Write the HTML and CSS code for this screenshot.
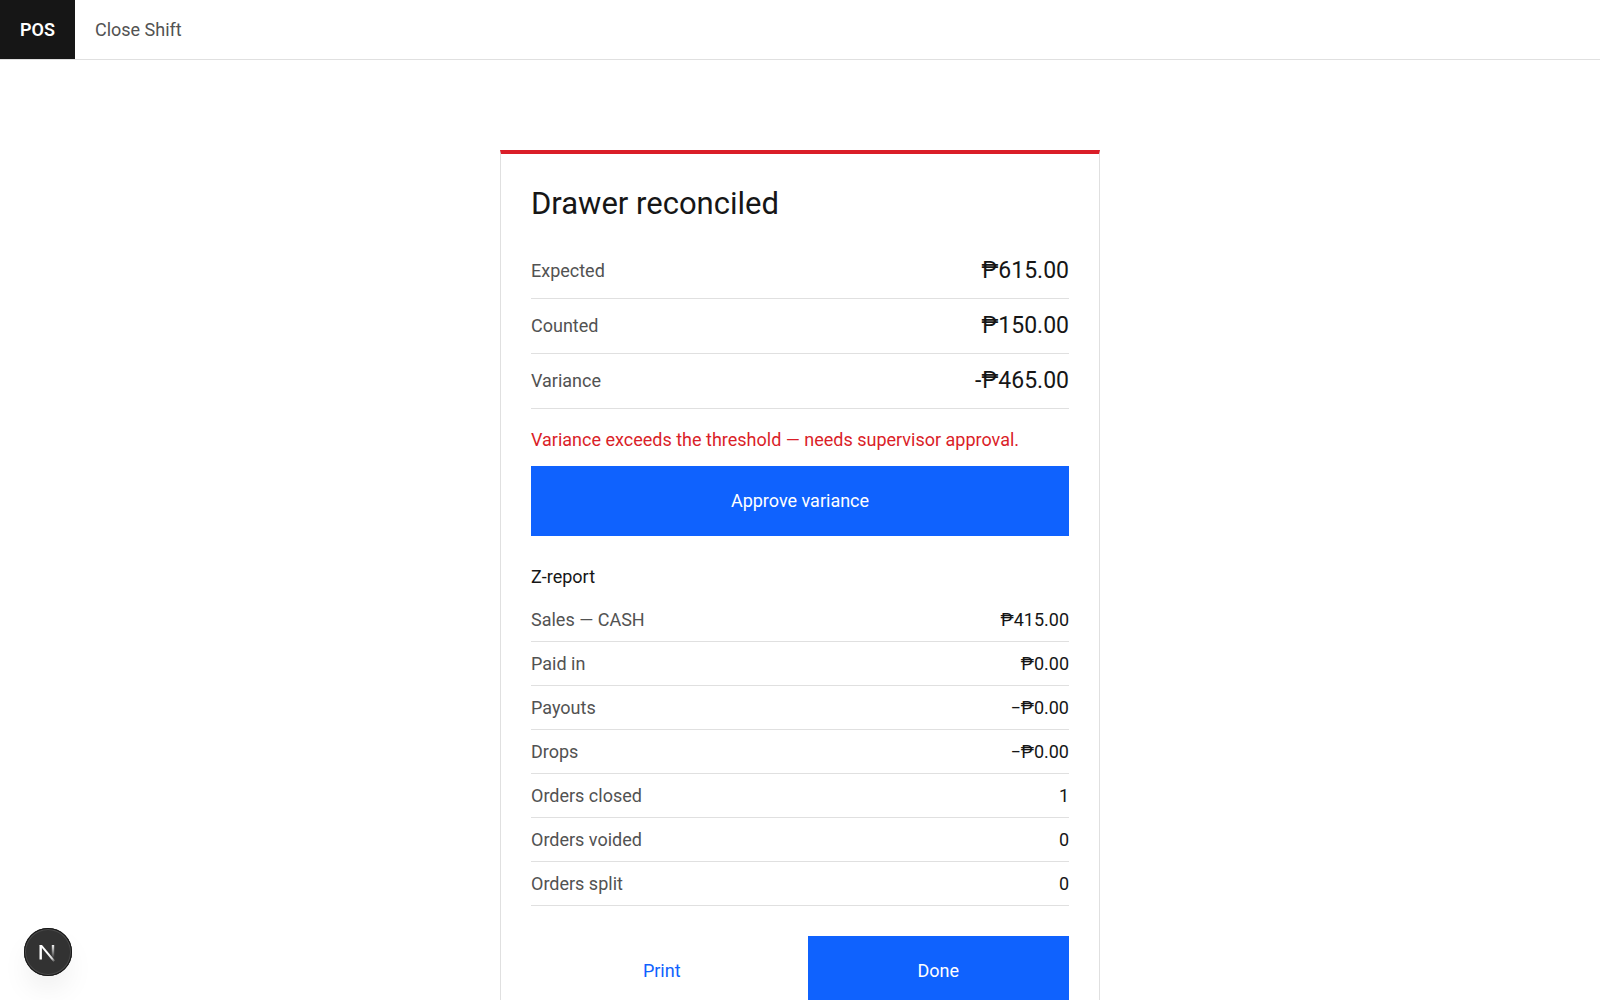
FILE: index.html
```html
<!DOCTYPE html>
<html lang="en">
<head>
    <meta charset="UTF-8">
    <meta name="viewport" content="width=device-width, initial-scale=1.0">
    <title>Close Shift</title>
    <link rel="stylesheet" href="styles.css">
</head>
<body>
    <header class="header">
        <a class="brand" href="#">POS</a>
        <span class="page-name">Close Shift</span>
    </header>

    <main class="card">
        <h1>Drawer reconciled</h1>

        <table class="totals">
            <tr><th scope="row">Expected</th><td>₱615.00</td></tr>
            <tr><th scope="row">Counted</th><td>₱150.00</td></tr>
            <tr><th scope="row">Variance</th><td>-₱465.00</td></tr>
        </table>

        <p class="error">Variance exceeds the threshold — needs supervisor approval.</p>
        <button class="btn btn-primary" type="button">Approve variance</button>

        <h2>Z-report</h2>
        <table class="report">
            <tr><th scope="row">Sales — CASH</th><td>₱415.00</td></tr>
            <tr><th scope="row">Paid in</th><td>₱0.00</td></tr>
            <tr><th scope="row">Payouts</th><td>−₱0.00</td></tr>
            <tr><th scope="row">Drops</th><td>−₱0.00</td></tr>
            <tr><th scope="row">Orders closed</th><td>1</td></tr>
            <tr><th scope="row">Orders voided</th><td>0</td></tr>
            <tr><th scope="row">Orders split</th><td>0</td></tr>
        </table>

        <div class="actions">
            <button class="btn btn-ghost" type="button">Print</button>
            <button class="btn btn-primary" type="button">Done</button>
        </div>
    </main>

    <button class="dev-badge" type="button" aria-label="Open dev tools">
        <svg width="48" height="48" viewBox="0 0 48 48" fill="none">
            <defs>
                <linearGradient id="diagonal" x1="24" y1="25" x2="31" y2="34" gradientUnits="userSpaceOnUse">
                    <stop stop-color="#fff"/>
                    <stop offset="0.6" stop-color="#fff" stop-opacity="0.8"/>
                    <stop offset="1" stop-color="#fff" stop-opacity="0"/>
                </linearGradient>
                <linearGradient id="stem" x1="29" y1="16" x2="29" y2="30" gradientUnits="userSpaceOnUse">
                    <stop stop-color="#fff"/>
                    <stop offset="1" stop-color="#fff" stop-opacity="0"/>
                </linearGradient>
            </defs>
            <path d="M15.500 17H18L31 32.500L29.500 34L15.500 17Z" fill="url(#diagonal)"/>
            <path d="M16.700 17V31.500" stroke="#fff" stroke-width="2.400"/>
            <path d="M29 17V30.500" stroke="url(#stem)" stroke-width="2.400"/>
        </svg>
    </button>
</body>
</html>
```
FILE: styles.css
```css
* {
    box-sizing: border-box;
}
body {
    margin: 0;
    font-family: Roboto, "Noto Sans", sans-serif;
    font-size: 18px;
    line-height: 22px;
    color: #161616;
    background-color: #fff;
}
.header {
    display: flex;
    height: 60px;
    border-bottom: 1px solid #e0e0e0;
}
.brand {
    display: flex;
    align-items: center;
    padding: 0 20px;
    background-color: #161616;
    color: #fff;
    font-weight: 600;
    text-decoration: none;
}
.page-name {
    display: flex;
    align-items: center;
    padding: 0 20px;
    color: #525252;
}
.card {
    max-width: 600px;
    margin: 90px auto 60px;
    padding: 30px;
    border: 1px solid #e0e0e0;
    border-top: 4px solid #da1e28;
}
h1 {
    margin: 0 0 20px;
    font-size: 31px;
    line-height: 40px;
    font-weight: 400;
}
h2 {
    margin: 30px 0 10px;
    font-size: 18px;
    line-height: 22px;
    font-weight: 400;
}
table {
    width: 100%;
    border-spacing: 0;
}
th,
td {
    height: 44px;
    padding: 0;
    border-bottom: 1px solid #e0e0e0;
}
th {
    text-align: left;
    font-weight: 400;
    color: #525252;
}
td {
    text-align: right;
}
.totals th,
.totals td {
    height: 55px;
}
.totals td {
    font-size: 23px;
}
.error {
    margin: 20px 0 15px;
    color: #da1e28;
}
.btn {
    width: 100%;
    height: 70px;
    padding: 0 15px;
    border: none;
    font: inherit;
    cursor: pointer;
}
.btn-primary {
    background-color: #0f62fe;
    color: #fff;
}
.btn-primary:hover {
    background-color: #0353e9;
}
.btn-ghost {
    background-color: transparent;
    color: #0f62fe;
}
.actions {
    display: flex;
    gap: 15px;
    margin-top: 30px;
}
.dev-badge {
    position: fixed;
    left: 24px;
    bottom: 24px;
    width: 48px;
    height: 48px;
    padding: 0;
    border: none;
    border-radius: 50%;
    background-color: #323232;
    box-shadow: inset 0 0 0 1px #171717, inset 0 0 0 2px #4a4a4a, 0 16px 32px -8px rgba(0,0,0,0.12);
    cursor: pointer;
}
.dev-badge svg {
    display: block;
}
```
